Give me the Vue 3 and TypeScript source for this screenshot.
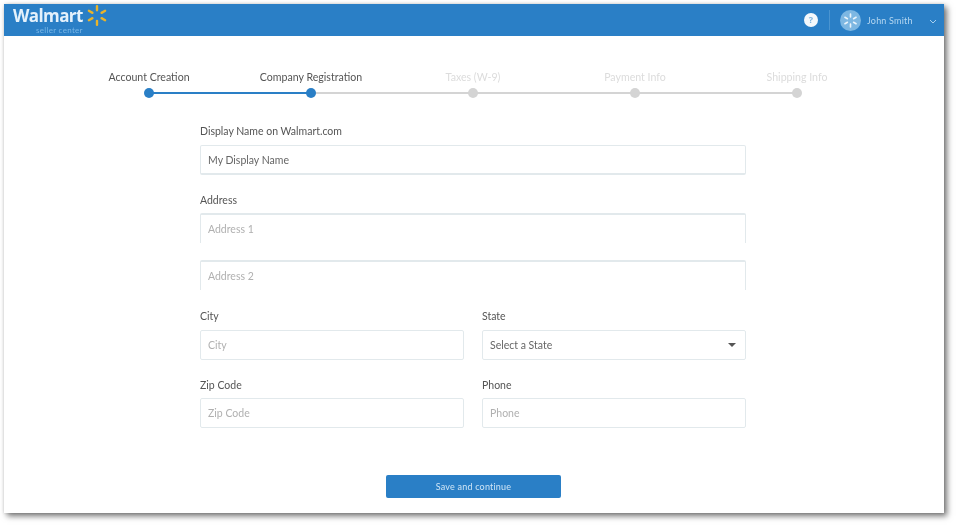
<template>
  <div class="page">
    <div class="window">
      <header class="topbar">
        <div class="brand">
          <div class="logoText">
            <span class="wordmark">Walmart</span>
            <span class="sub">seller center</span>
          </div>
          <svg class="spark" width="22" height="23" viewBox="-12 -12 24 24">
            <g fill="#e9b32a">
              <rect v-for="a in rays" :key="a" x="-1.3" y="-11.5" width="2.6" height="7" rx="1.2" :transform="`rotate(${a})`" />
            </g>
          </svg>
        </div>
        <div class="userArea">
          <div class="help">?</div>
          <div class="sep"></div>
          <div class="avatar">
            <svg width="15" height="15" viewBox="-12 -12 24 24">
              <g fill="#eaf4fb">
                <rect v-for="a in rays" :key="a" x="-1.3" y="-11.5" width="2.6" height="7" rx="1.2" :transform="`rotate(${a})`" />
              </g>
            </svg>
          </div>
          <span class="userName">John Smith</span>
          <svg class="chev" width="8" height="5" viewBox="0 0 8 5">
            <path d="M1 1l3 3 3-3" fill="none" stroke="#a9d0ee" stroke-width="1" />
          </svg>
        </div>
      </header>

      <div class="stepper">
        <div v-for="(s, i) in steps" :key="s" class="step" :class="{ done: i < 2 }">
          <div class="stepLabel">{{ s }}</div>
          <div class="track">
            <div v-if="i > 0" class="seg left" :class="{ on: i < 2 }"></div>
            <div v-if="i < steps.length - 1" class="seg right" :class="{ on: i < 1 }"></div>
            <div class="dot"></div>
          </div>
        </div>
      </div>

      <form class="form" @submit.prevent>
        <label class="lbl first">Display Name on Walmart.com</label>
        <input class="field filled" value="My Display Name" />

        <label class="lbl addr">Address</label>
        <input class="field open" placeholder="Address 1" />
        <input class="field open second" placeholder="Address 2" />

        <div class="row cityRow">
          <div class="col">
            <label class="lbl">City</label>
            <input class="field" placeholder="City" />
          </div>
          <div class="col">
            <label class="lbl">State</label>
            <div class="field select">
              <span>Select a State</span>
              <span class="caret"></span>
            </div>
          </div>
        </div>

        <div class="row zipRow">
          <div class="col">
            <label class="lbl">Zip Code</label>
            <input class="field" placeholder="Zip Code" />
          </div>
          <div class="col">
            <label class="lbl">Phone</label>
            <input class="field" placeholder="Phone" />
          </div>
        </div>

        <div class="actions">
          <button class="save" type="submit">Save and continue</button>
        </div>
      </form>
    </div>
  </div>
</template>

<script setup lang="ts">
const steps: string[] = [
  'Account Creation',
  'Company Registration',
  'Taxes (W-9)',
  'Payment Info',
  'Shipping Info',
]
const rays: number[] = [0, 60, 120, 180, 240, 300]
</script>

<style>
html,
body {
  margin: 0;
  background: #fff;
}
</style>

<style scoped>
.page {
  box-sizing: border-box;
  height: 525px;
  padding: 4px 0 0 4px;
  overflow: hidden;
}
.window {
  box-sizing: border-box;
  width: 940px;
  height: 509px;
  background: #fff;
  box-shadow: 3px 3px 6px rgba(0, 0, 0, 0.55), 0 0 3px rgba(0, 0, 0, 0.12);
  font-family: Lato, "Open Sans", sans-serif;
  color: #555;
  overflow: hidden;
}
.topbar,
.stepper,
.form {
  filter: blur(0.7px);
}
.topbar {
  height: 32px;
  background: #2a7fc6;
  display: flex;
  justify-content: space-between;
  align-items: center;
  padding: 0 7px 0 9px;
}
.brand {
  display: flex;
  align-items: flex-start;
  height: 32px;
}
.logoText {
  display: flex;
  flex-direction: column;
  align-items: flex-end;
  padding-top: 2px;
}
.wordmark {
  color: #e4f1fb;
  font: 700 17px/20px "Open Sans", sans-serif;
  letter-spacing: -0.6px;
}
.sub {
  color: #79b6e6;
  font-size: 8px;
  line-height: 8px;
  letter-spacing: 0.3px;
}
.spark {
  margin: 0 0 0 3px;
}
.userArea {
  display: flex;
  align-items: center;
}
.help {
  width: 14px;
  height: 14px;
  border-radius: 50%;
  background: #f4f8fb;
  color: #7fb4de;
  font: 700 9px/14px "Open Sans", sans-serif;
  text-align: center;
}
.sep {
  width: 1px;
  height: 20px;
  background: #4a94d0;
  margin: 0 10px 0 11px;
}
.avatar {
  width: 21px;
  height: 21px;
  border-radius: 50%;
  background: #7db7e2;
  display: flex;
  align-items: center;
  justify-content: center;
}
.userName {
  color: #b5d7f1;
  font-size: 9px;
  margin-left: 6px;
  letter-spacing: 0.2px;
  width: 62px;
}
.chev {
  margin-bottom: -2px;
}
.stepper {
  display: flex;
  justify-content: center;
  margin: 34px 2px 0 0;
}
.step {
  width: 162px;
  text-align: center;
}
.stepLabel {
  font-size: 10.6px;
  line-height: 14px;
  color: #dcdcdc;
}
.done .stepLabel {
  color: #555;
}
.track {
  position: relative;
  height: 10px;
  margin-top: 4px;
}
.seg {
  position: absolute;
  top: 4px;
  height: 2px;
  width: 50%;
  background: #d4d4d4;
}
.seg.left {
  left: 0;
}
.seg.right {
  right: 0;
}
.seg.on {
  background: #2a7fc6;
}
.dot {
  position: absolute;
  left: 50%;
  top: 0;
  width: 10px;
  height: 10px;
  margin-left: -5px;
  border-radius: 50%;
  background: #d4d4d4;
}
.done .dot {
  background: #2a7fc6;
}
.form {
  width: 546px;
  margin: 0 0 0 196px;
}
.lbl {
  display: block;
  font-size: 10.5px;
  line-height: 14px;
  color: #555;
  margin-bottom: 7px;
}
.lbl.first {
  margin-top: 26px;
}
.lbl.addr {
  margin-top: 18px;
  margin-bottom: 6px;
}
.field {
  display: block;
  box-sizing: border-box;
  width: 100%;
  height: 30px;
  padding: 0 7px;
  border: 1px solid #e2e9ec;
  border-radius: 2px;
  background: #fff;
  font-family: inherit;
  font-size: 10.5px;
  color: #666;
  outline: none;
}
.field::placeholder {
  color: #b0b0b0;
  opacity: 1;
}
.filled {
  border-bottom-width: 2px;
}
.open {
  border-top-width: 2px;
  border-bottom: none;
  border-radius: 2px 2px 0 0;
}
.second {
  margin-top: 17px;
}
.row {
  display: grid;
  grid-template-columns: 264px 264px;
  gap: 18px;
}
.cityRow {
  margin-top: 19px;
}
.zipRow {
  margin-top: 18px;
}
.zipRow .lbl {
  margin-bottom: 6px;
}
.select {
  display: flex;
  align-items: center;
  justify-content: space-between;
}
.caret {
  width: 0;
  height: 0;
  margin-right: 2px;
  border-left: 4px solid transparent;
  border-right: 4px solid transparent;
  border-top: 4px solid #555;
}
.actions {
  margin: 47px 0 0 186px;
}
.save {
  display: block;
  width: 175px;
  height: 23px;
  border: none;
  border-radius: 2px;
  background: #2a7fc6;
  color: #cfe5f6;
  font-family: inherit;
  font-size: 9px;
  letter-spacing: 0.2px;
  padding: 0;
}
</style>
